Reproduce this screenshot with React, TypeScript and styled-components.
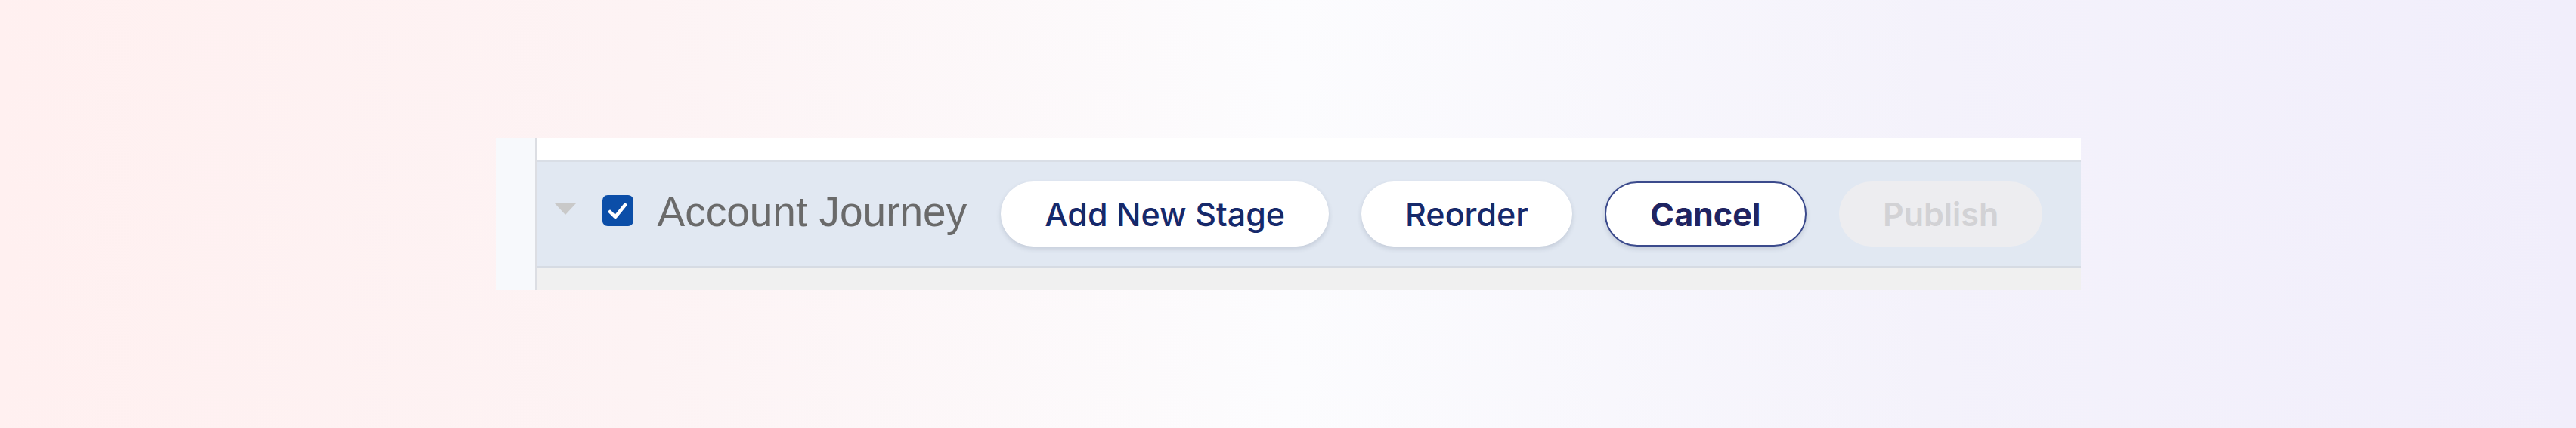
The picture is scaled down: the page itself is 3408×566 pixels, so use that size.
import React from "react";
import styled, { createGlobalStyle } from "styled-components";

const GlobalStyle = createGlobalStyle`
  html, body {
    margin: 0;
    padding: 0;
  }
  body {
    font-family: Inter, "Liberation Sans", sans-serif;
  }
`;

const Page = styled.div`
  width: 3408px;
  height: 566px;
  display: flex;
  align-items: center;
  justify-content: center;
  background: linear-gradient(90deg, #fff0f0 0%, #fdf3f4 25%, #fcfcfe 50%, #f4f2fb 75%, #f1eefb 100%);
`;

const Panel = styled.div`
  width: 2097px;
  height: 201px;
  display: flex;
  background: #ffffff;
`;

const SideStrip = styled.div`
  flex: 0 0 52px;
  background: #f7f9fc;
  border-right: 3px solid #dcdee3;
`;

const Main = styled.div`
  flex: 1;
  min-width: 0;
  display: flex;
  flex-direction: column;
`;

const TopSpace = styled.div`
  height: 29px;
  background: #ffffff;
  border-bottom: 2px solid #d9dee6;
`;

const Toolbar = styled.div`
  height: 138px;
  background: #e1e8f2;
  border-bottom: 2px solid #d6dbe3;
  display: flex;
  align-items: center;
  padding: 0 0 0 23px;
  overflow: hidden;
`;

const BottomSpace = styled.div`
  flex: 1;
  background: #f0f0f0;
`;

const Caret = styled.div`
  flex-shrink: 0;
  width: 0;
  height: 0;
  border-left: 14.5px solid transparent;
  border-right: 14.5px solid transparent;
  border-top: 15px solid #c9c9c9;
  margin-top: -12px;
  margin-right: 35px;
`;

const CheckBox = styled.div`
  flex-shrink: 0;
  width: 41px;
  height: 41px;
  border-radius: 7px;
  background: #0b4ea8;
  display: flex;
  align-items: center;
  justify-content: center;
  margin-right: 32px;
  margin-top: -8px;
`;

const Title = styled.span`
  font-family: "Liberation Sans", Arial, sans-serif;
  font-size: 55px;
  color: #6a6a6a;
  margin-right: 45px;
  margin-top: -6px;
  white-space: nowrap;
`;

const Actions = styled.div`
  display: flex;
  gap: 43px;
  align-items: center;
  flex-shrink: 0;
`;

type Variant = "plain" | "outline" | "disabled";

const Pill = styled.button<{ $variant: Variant }>`
  height: 86px;
  padding: 0 58px;
  min-width: 267px;
  border-radius: 43px;
  font-family: Inter, "Liberation Sans", sans-serif;
  font-size: 43px;
  white-space: nowrap;
  display: flex;
  align-items: center;
  justify-content: center;
  background: ${(p) => (p.$variant === "disabled" ? "#ededf0" : "#ffffff")};
  color: ${(p) => (p.$variant === "disabled" ? "#d2d2d5" : p.$variant === "outline" ? "#1f2462" : "#16296b")};
  font-weight: ${(p) => (p.$variant === "outline" ? 700 : p.$variant === "disabled" ? 600 : 500)};
  border: ${(p) => (p.$variant === "outline" ? "2.5px solid #3b4a8c" : "none")};
  box-shadow: ${(p) => (p.$variant === "disabled" ? "none" : "0 3px 6px rgba(40, 50, 80, 0.16)")};
`;

const buttons: { label: string; variant: Variant }[] = [
  { label: "Add New Stage", variant: "plain" },
  { label: "Reorder", variant: "plain" },
  { label: "Cancel", variant: "outline" },
  { label: "Publish", variant: "disabled" },
];

export default function App() {
  return (
    <>
      <GlobalStyle />
      <Page>
        <Panel>
          <SideStrip />
          <Main>
            <TopSpace />
            <Toolbar>
              <Caret />
              <CheckBox>
                <svg width="26" height="22" viewBox="0 0 26 22">
                  <path d="M3 12 L10 19 L23 3" fill="none" stroke="#ffffff" strokeWidth="4.5" strokeLinecap="round" strokeLinejoin="round" />
                </svg>
              </CheckBox>
              <Title>Account Journey</Title>
              <Actions>
                {buttons.map((b) => (
                  <Pill key={b.label} $variant={b.variant}>
                    {b.label}
                  </Pill>
                ))}
              </Actions>
            </Toolbar>
            <BottomSpace />
          </Main>
        </Panel>
      </Page>
    </>
  );
}
